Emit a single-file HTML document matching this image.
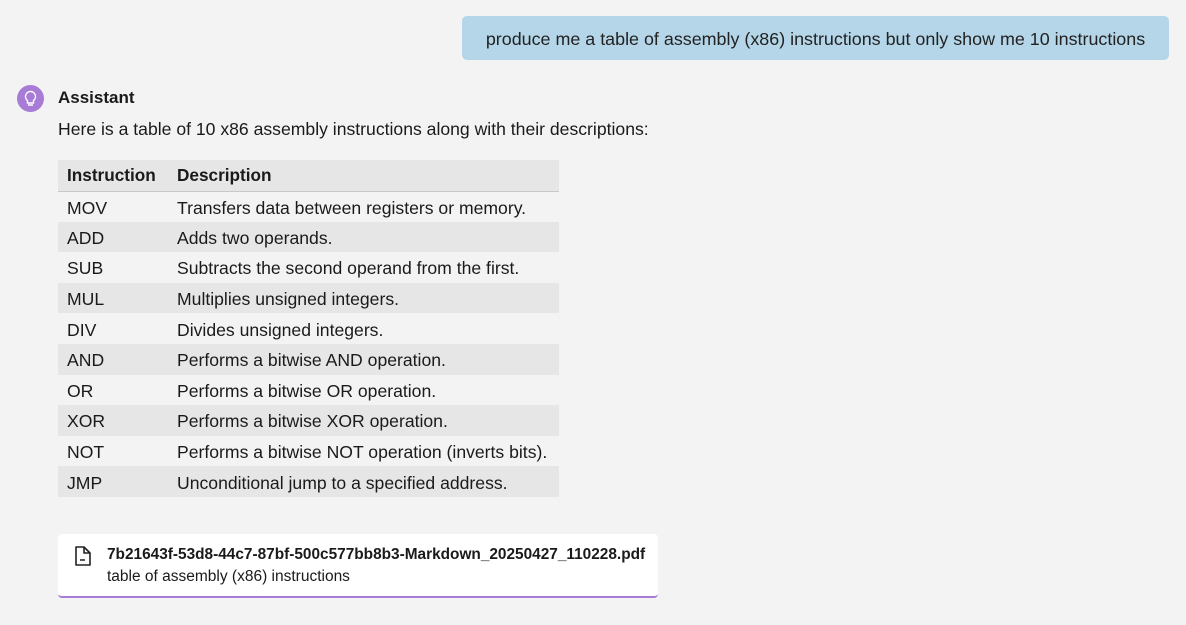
<!DOCTYPE html>
<html><head><meta charset="utf-8"><style>
body{margin:0;background:#f3f3f3;width:1186px;height:625px;overflow:hidden;font-family:"Liberation Sans",sans-serif;color:#1a1a1a;position:relative}
.bubble{position:absolute;left:462px;top:16px;width:707px;height:44px;background:#b4d6e8;border-radius:5px;font-size:17.9px;line-height:46px;text-align:center;color:#222}
.av{position:absolute;left:17px;top:85px;width:27px;height:27px;border-radius:50%;background:#a77bd6}
.name{position:absolute;left:58px;top:88px;font-weight:bold;font-size:17px}
.intro{position:absolute;left:58px;top:119px;font-size:17.6px}
table{position:absolute;left:58px;top:160px;border-collapse:collapse;font-size:17.6px;width:501px;table-layout:fixed}
th{text-align:left;height:31px;box-sizing:border-box;background:#e6e6e6;border-bottom:1px solid #c8c8c8;padding:1px 9px 0;font-weight:bold;font-size:17.2px}
td{height:30.6px;padding:3px 9px 0;white-space:nowrap;box-sizing:border-box}
tr:nth-child(odd) td{background:#e6e6e6}
.card{position:absolute;left:58px;top:534px;width:600px;height:62px;background:#fff;border-radius:4px;border-bottom:2px solid #a77bd6}
.fn{position:absolute;left:49px;top:12px;font-size:15.4px;font-weight:bold}
.sub{position:absolute;left:49px;top:34px;font-size:15.5px}
</style></head><body>
<div class="bubble">produce me a table of assembly (x86) instructions but only show me 10 instructions</div>
<div class="av"><svg width="27" height="27" viewBox="0 0 27 27"><path d="M13.5 6.5a5 5 0 0 0-3 9v2.5h6v-2.5a5 5 0 0 0-3-9z M11 20h5" fill="none" stroke="#fff" stroke-width="1.4"/></svg></div>
<div class="name">Assistant</div>
<div class="intro">Here is a table of 10 x86 assembly instructions along with their descriptions:</div>
<table>
<tr><th style="width:110px">Instruction</th><th>Description</th></tr>
<tr><td>MOV</td><td>Transfers data between registers or memory.</td></tr>
<tr><td>ADD</td><td>Adds two operands.</td></tr>
<tr><td>SUB</td><td>Subtracts the second operand from the first.</td></tr>
<tr><td>MUL</td><td>Multiplies unsigned integers.</td></tr>
<tr><td>DIV</td><td>Divides unsigned integers.</td></tr>
<tr><td>AND</td><td>Performs a bitwise AND operation.</td></tr>
<tr><td>OR</td><td>Performs a bitwise OR operation.</td></tr>
<tr><td>XOR</td><td>Performs a bitwise XOR operation.</td></tr>
<tr><td>NOT</td><td>Performs a bitwise NOT operation (inverts bits).</td></tr>
<tr><td>JMP</td><td>Unconditional jump to a specified address.</td></tr>
</table>
<div class="card">
<svg style="position:absolute;left:16px;top:11px" width="18" height="22" viewBox="0 0 18 22"><path d="M2 2h8l6 6v12H2z M10 2v6h6 M6 15h5" fill="none" stroke="#222" stroke-width="1.6" stroke-linejoin="round"/></svg>
<div class="fn">7b21643f-53d8-44c7-87bf-500c577bb8b3-Markdown_20250427_110228.pdf</div>
<div class="sub">table of assembly (x86) instructions</div>
</div>
</body></html>
